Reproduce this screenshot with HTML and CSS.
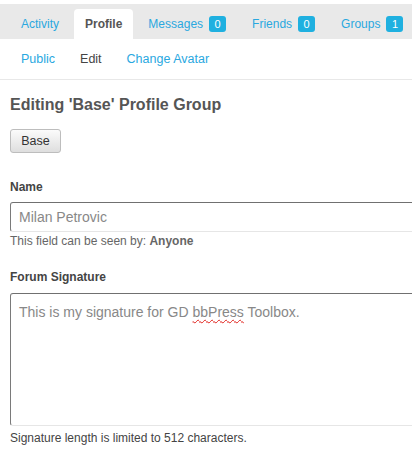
FILE: index.html
```html
<!DOCTYPE html>
<html lang="en">
<head>
<meta charset="UTF-8">
<meta name="viewport" content="width=device-width, initial-scale=1.0">
<title>Edit Profile</title>
<link rel="stylesheet" href="styles.css">
</head>
<body>

<nav class="main-nav">
    <a href="#" class="tab">Activity</a>
    <a href="#" class="tab current">Profile</a>
    <a href="#" class="tab">Messages <span class="count">0</span></a>
    <a href="#" class="tab">Friends <span class="count">0</span></a>
    <a href="#" class="tab">Groups <span class="count">1</span></a>
</nav>

<nav class="sub-nav">
    <a href="#" class="sub-tab">Public</a>
    <a href="#" class="sub-tab current">Edit</a>
    <a href="#" class="sub-tab">Change Avatar</a>
</nav>

<div class="content">
    <h2>Editing 'Base' Profile Group</h2>
    <button class="group-btn">Base</button>

    <div class="field">
        <label for="field-name">Name</label>
        <input id="field-name" class="text-input" type="text" value="Milan Petrovic">
        <p class="field-note">This field can be seen by: <strong>Anyone</strong></p>
    </div>

    <div class="field">
        <label>Forum Signature</label>
        <div class="text-area" role="textbox" aria-multiline="true">This is my signature for GD <span class="misspelled">bbPress</span> Toolbox.</div>
        <p class="field-note dark">Signature length is limited to 512 characters.</p>
    </div>
</div>

</body>
</html>
```

FILE: styles.css
```css
* {
    margin: 0;
    padding: 0;
    box-sizing: border-box;
}

body {
    font-family: "Liberation Sans", Arial, sans-serif;
    background: #fff;
    color: #555;
    overflow: hidden;
}

a {
    text-decoration: none;
    color: #2aa8df;
}

/* top tabs */
.main-nav {
    margin-top: 4px;
    height: 35px;
    background: #e9e9e9;
    display: flex;
    align-items: flex-end;
    gap: 4px;
    padding-left: 10px;
    white-space: nowrap;
    overflow: hidden;
}

.tab {
    height: 30px;
    padding: 0 11px;
    display: flex;
    align-items: center;
    font-size: 12px;
    border-radius: 4px 4px 0 0;
}

.tab.current {
    background: #fff;
    color: #555;
    font-weight: bold;
}

.count {
    margin-left: 6px;
    min-width: 17px;
    height: 16px;
    line-height: 16px;
    padding: 0 5px;
    border-radius: 3px;
    background: #1fb0e0;
    color: #fff;
    font-size: 11px;
    text-align: center;
}

/* second level tabs */
.sub-nav {
    height: 41px;
    display: flex;
    align-items: center;
    gap: 3px;
    padding-left: 10px;
    border-bottom: 1px solid #e8e8e8;
}

.sub-tab {
    padding: 0 11px;
    font-size: 12.5px;
}

.sub-tab.current {
    color: #444;
}

/* form */
.content {
    padding-left: 10px;
}

h2 {
    font-size: 16px;
    line-height: 20px;
    margin-top: 15px;
    color: #555;
}

.group-btn {
    margin-top: 14px;
    height: 24px;
    width: 51px;
    font-family: inherit;
    font-size: 12.5px;
    color: #333;
    border: 1px solid #bdbdbd;
    border-radius: 3px;
    background: linear-gradient(#fbfbfb, #dedede);
}

.field label {
    display: block;
    font-size: 12px;
    line-height: 16px;
    font-weight: bold;
    color: #444;
    margin-top: 26px;
    margin-bottom: 7px;
}

.field + .field label {
    margin-top: 20px;
    margin-bottom: 8px;
}

.text-input,
.text-area {
    display: block;
    width: 100%;
    border: 1px solid #dcdcdc;
    border-top-color: #707070;
    border-left-color: #7a7a7a;
    border-right: none;
    border-bottom-color: #e6e6e6;
    border-radius: 3px 0 0 3px;
    font-family: inherit;
    font-size: 14px;
    color: #888;
    background: #fff;
}

.text-input {
    height: 30px;
    padding: 0 8px;
}

.text-area {
    height: 133px;
    padding: 10px 8px;
    line-height: 16px;
}

.misspelled {
    text-decoration: underline wavy #e0201a;
    text-decoration-thickness: 1px;
    text-underline-offset: 2px;
}

.field-note {
    font-size: 12px;
    line-height: 16px;
    color: #666;
    margin-top: 1px;
}

.field-note.dark {
    color: #444;
    margin-top: 4px;
}
```
